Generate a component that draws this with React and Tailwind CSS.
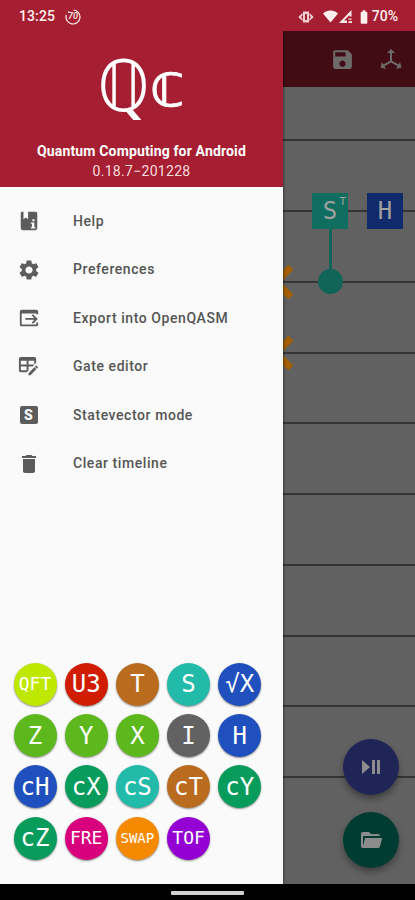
import { MdBatteryFull, MdSave, MdSettings, MdDelete } from 'react-icons/md';

const Icon = ({ d, className }) => (
  <svg viewBox="0 0 24 24" className={className} fill="currentColor" fillRule="evenodd">
    <path d={d} />
  </svg>
);

const PATHS = {
  help: 'M4 2H6V10L8.5 8.2L11 10V2H19A2 2 0 0 1 21 4V20A2 2 0 0 1 19 22H5A2 2 0 0 1 3 20V4A2 2 0 0 1 4 2ZM15.7 10V12.2H18V10ZM14 13.6V15H15.2V18.8H14V20.2H19V18.8H17.8V13.6Z',
  exportApp: 'M4 3H20A2 2 0 0 1 22 5V8H20V7H4V19H20V17H22V19A2 2 0 0 1 20 21H4A2 2 0 0 1 2 19V5A2 2 0 0 1 4 3ZM16.4 7.8L21.6 13L16.4 18.2L15 16.8L17.8 14H8V12H17.8L15 9.2Z',
  tableEdit: 'M21.7,13.35L20.7,14.35L18.65,12.3L19.65,11.3C19.86,11.08 20.21,11.08 20.42,11.3L21.7,12.58C21.92,12.79 21.92,13.14 21.7,13.35M12,18.94L18.07,12.88L20.12,14.88L14.06,21H12V18.94M4,2H18A2,2 0 0,1 20,4V8.17L16.17,12H12V16.17L10.17,18H4A2,2 0 0,1 2,16V4A2,2 0 0,1 4,2M4,6V10H10V6H4M12,6V10H18V6H12M4,12V16H10V12H4Z',
  axis: 'M12,2L16,6H13V13.85L19.53,17.61L21,15.03L22.5,20.5L17,21.96L18.53,19.35L12,15.58L5.47,19.35L7,21.96L1.5,20.5L3,15.03L4.47,17.61L11,13.85V6H8L12,2Z',
  playPause: 'M3,5V19L11,12M13,19H16V5H13M18,5V19H21V5',
  folder: 'M19,20H4C2.89,20 2,19.1 2,18V6C2,4.89 2.89,4 4,4H10L12,6H19A2,2 0 0,1 21,8H21L4,8V18L6.14,10H23.21L20.93,18.5C20.7,19.37 19.92,20 19,20Z',
};

const StatevectorIcon = () => (
  <span className="flex size-[18px] items-center justify-center rounded-[2px] bg-[#5c5c5c] font-['Roboto',sans-serif] text-[14px] font-black leading-none text-[#fafafa]">S</span>
);

const MENU = [
  { label: 'Help', icon: <Icon d={PATHS.help} className="size-[22px]" /> },
  { label: 'Preferences', icon: <MdSettings size={24} /> },
  { label: 'Export into OpenQASM', icon: <Icon d={PATHS.exportApp} className="size-[22px]" /> },
  { label: 'Gate editor', icon: <Icon d={PATHS.tableEdit} className="size-[23px]" /> },
  { label: 'Statevector mode', icon: <StatevectorIcon /> },
  { label: 'Clear timeline', icon: <MdDelete size={24} /> },
];

const GATES = [
  { name: 'QFT', bg: 'bg-[#bfe800]', size: 'text-[18px]' },
  { name: 'U3', bg: 'bg-[#d01c00]', size: 'text-[24px]' },
  { name: 'T', bg: 'bg-[#ba6c1e]', size: 'text-[24px]' },
  { name: 'S', bg: 'bg-[#22bbaa]', size: 'text-[24px]' },
  { name: '√X', bg: 'bg-[#1f50be]', size: 'text-[24px]' },
  { name: 'Z', bg: 'bg-[#5cb81c]', size: 'text-[24px]' },
  { name: 'Y', bg: 'bg-[#5cb81c]', size: 'text-[24px]' },
  { name: 'X', bg: 'bg-[#5cb81c]', size: 'text-[24px]' },
  { name: 'I', bg: 'bg-[#626262]', size: 'text-[24px]' },
  { name: 'H', bg: 'bg-[#1f50be]', size: 'text-[24px]' },
  { name: 'cH', bg: 'bg-[#1f50be]', size: 'text-[24px]' },
  { name: 'cX', bg: 'bg-[#079c5c]', size: 'text-[24px]' },
  { name: 'cS', bg: 'bg-[#22bbaa]', size: 'text-[24px]' },
  { name: 'cT', bg: 'bg-[#ba6c1e]', size: 'text-[24px]' },
  { name: 'cY', bg: 'bg-[#079c5c]', size: 'text-[24px]' },
  { name: 'cZ', bg: 'bg-[#079c5c]', size: 'text-[24px]' },
  { name: 'FRE', bg: 'bg-[#d8007c]', size: 'text-[18px]' },
  { name: 'SWAP', bg: 'bg-[#f58a00]', size: 'text-[14px]' },
  { name: 'TOF', bg: 'bg-[#9400d3]', size: 'text-[18px]' },
];

function StatusBar() {
  return (
    <header className="relative z-20 flex h-[31px] shrink-0 items-center bg-[#a51e32] pl-[19px] pr-[17px] pt-[2px] text-[14px] font-medium text-[#fff0ee]">
      <span className="tracking-[0.1px]">13:25</span>
      <span className="relative ml-[10px] flex size-[16px] items-center justify-center text-[9px] italic">
        <svg viewBox="0 0 16 16" className="absolute inset-0" fill="none" stroke="currentColor" strokeWidth="1.2">
          <path d="M8.5 1A7 7 0 1 1 1.3 6M3 3.6L4.4 2.5" />
        </svg>
        70
      </span>
      <div className="ml-auto flex items-center">
        <svg viewBox="0 0 16 12" className="h-[12px] w-[16px]" fill="currentColor" opacity=".85">
          <path fillRule="evenodd" d="M5 .5h6v11H5zM7 3v6h2V3z" />
          <path d="M4.5 2L.3 6L4.5 10V7.4L3 6L4.5 4.6zM11.5 2L15.7 6L11.5 10V7.4L13 6L11.5 4.6z" />
        </svg>
        <svg viewBox="0 0 16 13" className="ml-[9px] h-[13px] w-[15px]" fill="currentColor">
          <path d="M0 3.2C4.5-1 11.5-1 16 3.2L8 13z" />
        </svg>
        <svg viewBox="0 0 14 13" className="ml-[1px] h-[13px] w-[14px]" fill="currentColor">
          <path d="M0 13L12.5 0V6.5H10.5V5L5 10.6H8V13zM9.5 8.5h3v1.3h-3zM9.5 11.2h3.5V13H9.5z" />
        </svg>
        <MdBatteryFull size={16} className="ml-[3px]" />
        <span className="tracking-[0]">70%</span>
      </div>
    </header>
  );
}

function Drawer() {
  return (
    <aside className="z-10 flex w-[283px] shrink-0 flex-col bg-[#fafafa] shadow-[0_0_3px_rgba(0,0,0,0.7)]">
      <div className="flex h-[156px] shrink-0 flex-col items-center bg-[#a51e32] text-white">
        <div className="mt-[10px] flex h-[100px] items-center font-['DejaVu_Sans'] text-[66px] leading-none">
          <span className="-translate-y-[4px] scale-y-[1.07]">ℚ</span>
          <span className="-translate-y-[5px] scale-y-[0.93] [-webkit-text-stroke:0.8px_white]">𝕔</span>
        </div>
        <div className="text-[14px] font-bold leading-[20px] tracking-[0.15px]">Quantum Computing for Android</div>
        <div className="text-[14px] leading-[20px] tracking-[0.3px] text-[#fbdcdc]">0.18.7−201228</div>
      </div>

      <nav className="pt-[10px]">
        {MENU.map(({ label, icon }) => (
          <div key={label} className="flex h-[48.5px] items-center text-[#5c5c5c]">
            <span className="ml-[16px] flex w-[25px] justify-center">{icon}</span>
            <span className="ml-[32px] text-[14px] font-medium tracking-[0.57px] text-[#555]">{label}</span>
          </div>
        ))}
      </nav>

      <div className="mb-[24.5px] ml-[13.5px] mt-auto grid grid-cols-[repeat(5,43px)] gap-[8.2px]">
        {GATES.map(g => (
          <div key={g.name} className={`flex size-[43px] items-center justify-center rounded-full font-['DejaVu_Sans_Mono',monospace] leading-none text-white shadow-[0_1px_2px_rgba(0,0,0,0.45)] ${g.bg} ${g.size}`}>
            {g.name}
          </div>
        ))}
      </div>
    </aside>
  );
}

const Cross = ({ className }) => (
  <svg viewBox="0 0 32 32" className={className} stroke="#a35f00" strokeWidth="6.5">
    <path d="M2 2L30 30M2 30L30 2" />
  </svg>
);

function Timeline() {
  return (
    <main className="flex min-w-0 grow flex-col">
      <div className="flex h-[56px] shrink-0 items-center bg-[#420c14] pl-[47px] text-[#6c6b69]">
        <MdSave size={25} />
        <Icon d={PATHS.axis} className="ml-[24px] size-[24px] shrink-0" />
      </div>
      <div className="relative grow overflow-hidden bg-[#616161]">
        {Array.from({ length: 10 }, (_, i) => (
          <div key={i} className={`border-b-2 border-[#353535] ${i === 0 ? 'h-[54.4px]' : 'h-[70.75px]'}`} />
        ))}

        <Cross className="absolute left-[-24px] top-[178px] size-[34px]" />
        <Cross className="absolute left-[-24px] top-[249px] size-[34px]" />

        <div className="absolute left-[46px] top-[140px] h-[44px] w-[3px] bg-[#106458]" />
        <div className="absolute left-[35px] top-[182px] size-[25px] rounded-full bg-[#106458]" />
        <div className="absolute left-[29px] top-[106px] flex size-[36px] items-center justify-center bg-[#106e60] font-['DejaVu_Sans_Mono',monospace] text-[24px] leading-none text-[#a0a0a0]">
          S
          <span className="absolute right-[2px] top-[3px] text-[11px] leading-none">T</span>
        </div>
        <div className="absolute left-[84px] top-[106px] flex size-[36px] items-center justify-center bg-[#102a6c] font-['DejaVu_Sans_Mono',monospace] text-[24px] leading-none text-[#a0a0a0]">H</div>

        <div className="absolute bottom-[16px] right-[16px] flex flex-col gap-[17px] text-[#8c8c8c]">
          <div className="flex size-[56px] items-center justify-center rounded-full bg-[#202558] shadow-[0_4px_6px_rgba(0,0,0,0.35)]">
            <Icon d={PATHS.playPause} className="size-[24px]" />
          </div>
          <div className="flex size-[56px] items-center justify-center rounded-full bg-[#003c32] shadow-[0_4px_6px_rgba(0,0,0,0.35)]">
            <Icon d={PATHS.folder} className="size-[24px]" />
          </div>
        </div>
      </div>
    </main>
  );
}

export default function App() {
  return (
    <div className="flex h-[900px] w-[415px] flex-col overflow-hidden bg-black font-['Roboto',sans-serif]">
      <StatusBar />
      <div className="flex h-[853px] shrink-0">
        <Drawer />
        <Timeline />
      </div>
      <footer className="flex grow justify-center pt-[7px]">
        <div className="h-[4px] w-[73px] rounded-[1px] bg-[#d2d0d0]" />
      </footer>
    </div>
  );
}
